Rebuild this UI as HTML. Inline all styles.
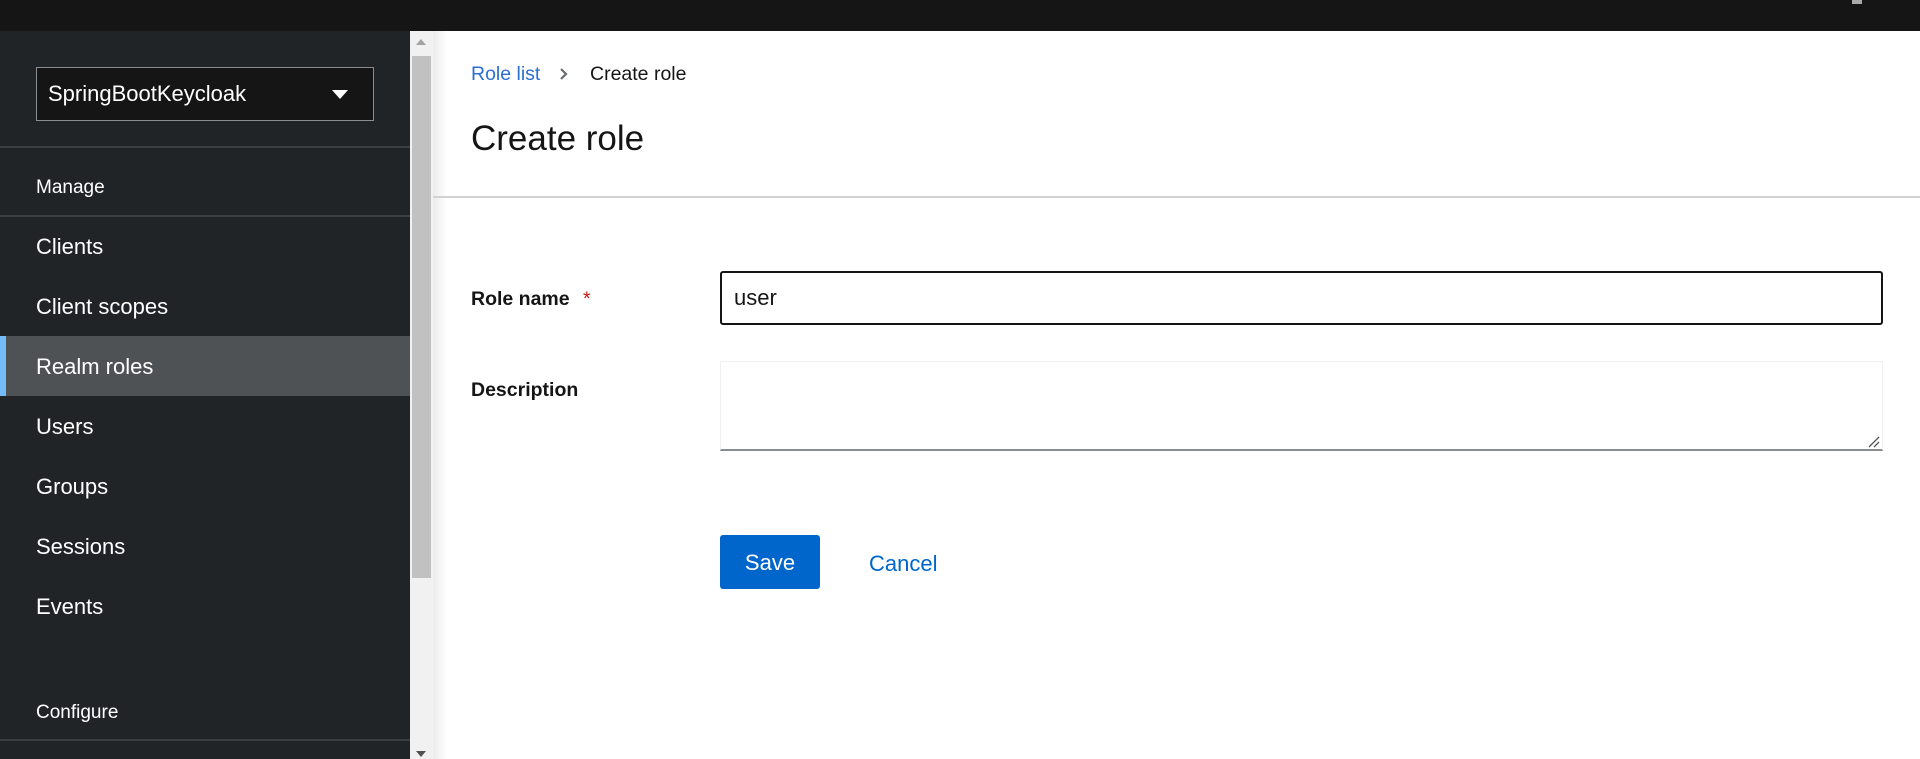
<!DOCTYPE html>
<html><head><style>
*{margin:0;padding:0;box-sizing:border-box}
body{width:1920px;height:759px;overflow:hidden;background:#fff;font-family:"Liberation Sans",sans-serif;position:relative}
.top{position:absolute;left:0;top:0;width:1920px;height:31px;background:#151515}
.side{position:absolute;left:0;top:31px;width:410px;height:728px;background:#212427;color:#fff}
.sel{position:absolute;left:36px;top:36px;width:338px;height:54px;background:#151515;border:1px solid #8a8d90;font-size:22px;line-height:52px;padding-left:11px}
.sel:after{content:"";position:absolute;left:295px;top:22px;border-left:8px solid transparent;border-right:8px solid transparent;border-top:9px solid #fff}
.hr{position:absolute;left:0;width:410px;height:2px;background:#3c3f42}
.it{position:absolute;left:36px;font-size:22px;line-height:30px}
.sm{font-size:19px}
.act{position:absolute;left:0;top:305px;width:410px;height:60px;background:#4f5255;border-left:6px solid #73bcf7}
.sb{position:absolute;left:410px;top:31px;width:23px;height:728px;background:#f1f1f1}
.th{position:absolute;left:2px;top:25px;width:19px;height:522px;background:#c1c1c1}
.shadow{position:absolute;left:433px;top:31px;width:14px;height:728px;background:linear-gradient(to right,rgba(0,0,0,.08),rgba(0,0,0,0))}
.c{position:absolute;color:#151515}
</style></head><body>
<div class="top"><div style="position:absolute;left:1852px;top:0;width:10px;height:4px;background:#aaa"></div></div>
<div class="side">
<div class="sel">SpringBootKeycloak</div>
<div class="hr" style="top:115px"></div>
<div class="it sm" style="top:142px">Manage</div>
<div class="hr" style="top:184px"></div>
<div class="it" style="top:201px">Clients</div>
<div class="it" style="top:261px">Client scopes</div>
<div class="act"></div>
<div class="it" style="top:321px">Realm roles</div>
<div class="it" style="top:381px">Users</div>
<div class="it" style="top:441px">Groups</div>
<div class="it" style="top:501px">Sessions</div>
<div class="it" style="top:561px">Events</div>
<div class="it sm" style="top:667px">Configure</div>
<div class="hr" style="top:708px"></div>
</div>
<div class="sb"><div style="position:absolute;left:6px;top:8px;border-left:5px solid transparent;border-right:5px solid transparent;border-bottom:6px solid #a3a3a3"></div><div class="th"></div><div style="position:absolute;left:6px;top:720px;border-left:5px solid transparent;border-right:5px solid transparent;border-top:6px solid #505050"></div></div>
<div class="shadow"></div>
<div class="c" style="left:471px;top:63px;font-size:19.5px;color:#2b6fd3">Role list</div>
<svg style="position:absolute;left:559px;top:67px" width="10" height="14"><path d="M2 2l5 5-5 5" stroke="#6a6e73" stroke-width="2.2" fill="none"/></svg>
<div class="c" style="left:590px;top:63px;font-size:19.5px">Create role</div>
<div class="c" style="left:471px;top:119px;font-size:35px">Create role</div>
<div style="position:absolute;left:433px;top:196px;width:1487px;height:2px;background:#d2d2d2"></div>
<div class="c" style="left:471px;top:288px;font-size:19.5px;font-weight:bold">Role name <span style="color:#c9190b;font-weight:normal;margin-left:8px">*</span></div>
<div style="position:absolute;left:720px;top:271px;width:1163px;height:54px;border:2px solid #151515;border-radius:3px;font-size:22px;line-height:50px;padding-left:12px;color:#151515">user</div>
<div class="c" style="left:471px;top:379px;font-size:19.5px;font-weight:bold">Description</div>
<div style="position:absolute;left:720px;top:361px;width:1163px;height:90px;border:1px solid #f0f0f0;border-bottom:2px solid #8a8d90"></div>
<svg style="position:absolute;left:1868px;top:436px" width="12" height="12"><path d="M1 11L11 1M6 11L11 6" stroke="#555" stroke-width="1.3"/></svg>
<div style="position:absolute;left:720px;top:535px;width:100px;height:54px;background:#0066cc;border-radius:3px;color:#fff;font-size:22px;line-height:56px;text-align:center">Save</div>
<div class="c" style="left:869px;top:551px;font-size:22px;color:#0066cc">Cancel</div>
</body></html>
